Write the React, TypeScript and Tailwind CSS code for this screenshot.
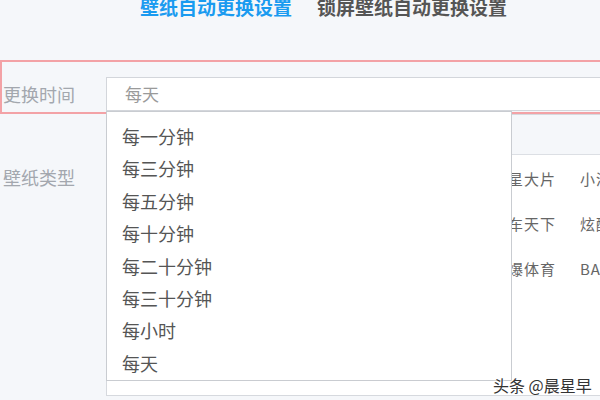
const OPTIONS = ['每一分钟', '每三分钟', '每五分钟', '每十分钟', '每二十分钟', '每三十分钟', '每小时', '每天'];

// 只有右侧两列露在下拉菜单外面
const CATEGORIES = [
  ['明星大片', '小清新'],
  ['汽车天下', '炫酷时尚'],
  ['火爆体育', 'BABY秀'],
];

export default function App() {
  return (
    <div
      className="relative w-[600px] h-[400px] overflow-hidden bg-[#f5f7fa]"
      style={{ fontFamily: '"Noto Sans CJK SC", "Noto Sans", sans-serif' }}
    >
      {/* 顶部标签 */}
      <div className="-mt-[3px] h-[19px] flex pl-[140px] gap-[25px] text-[19px] leading-[19px] font-bold whitespace-nowrap">
        <span className="text-[#1a9bf0]">壁纸自动更换设置</span>
        <span className="text-[#555]">锁屏壁纸自动更换设置</span>
      </div>

      {/* 更换时间 */}
      <div className="mt-[44px] w-[640px] h-[54px] border-2 border-[#f3a2a6] flex items-end pb-[1px]">
        <div className="w-[104px] h-[34px] flex items-center pl-[1px] text-[18px] text-[#a3a7ae]">更换时间</div>
        <div className="flex-1 h-[34px] bg-white border border-[#d3d6db] flex items-center pl-[18px] text-[17px] text-[#9a9a9a]">
          每天
        </div>
      </div>

      {/* 壁纸类型 */}
      <div className="flex">
        <div className="w-[106px] pt-[51px] pl-[3px] text-[18px] leading-[24px] text-[#a3a7ae]">壁纸类型</div>
        <div className="flex-1 h-[282px] bg-white border border-[#d6d9de] border-r-0 overflow-hidden">
          <div className="h-[40px] bg-[#f5f7fa] border-b border-[#dcdfe4]" />
          <div className="pt-[2px] pl-[385px]">
            {CATEGORIES.map((row, i) => (
              <div key={i} className="flex h-[45px] items-center text-[15px] text-[#666] whitespace-nowrap">
                {row.map((c) => (
                  <span key={c} className="w-[88px] shrink-0 tracking-[1px]">{c}</span>
                ))}
              </div>
            ))}
          </div>
        </div>
      </div>

      {/* 下拉菜单 */}
      <div className="absolute left-[106px] top-[111px] w-[406px] h-[270px] bg-white border border-[#c9ccd1] pt-[8px]">
        {OPTIONS.map((o) => (
          <div key={o} className="h-[32.4px] leading-[32.4px] pl-[15px] text-[18px] text-[#555]">
            {o}
          </div>
        ))}
      </div>

      {/* 水印 */}
      <div className="absolute left-[493px] top-[375px] text-[16px] leading-[20px] text-[#333] whitespace-nowrap [text-shadow:0_0_2px_#fff,0_0_2px_#fff]">
        头条 @晨星早
      </div>
    </div>
  );
}
